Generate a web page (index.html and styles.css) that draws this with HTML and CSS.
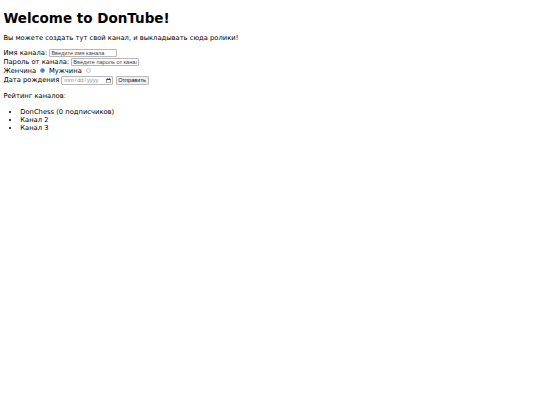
FILE: index.html
```html
<!DOCTYPE html>
<html lang="ru">
<head>
<meta charset="utf-8">
<title>DonTube</title>
<link rel="stylesheet" href="styles.css">
</head>
<body class="page">
<h1 class="title">Welcome to DonTube!</h1>
<p class="intro">Вы можете создать тут свой канал, и выкладывать сюда ролики!</p>
<form class="channel-form">
Имя канала: <input class="field field-name" type="text" placeholder="Введите имя канала"><br>
Пароль от канала: <input class="field field-pass" type="password" placeholder="Введите пароль от канала"><br>
Женчина <input class="radio" type="radio" name="sex" checked> Мужчина <input class="radio" type="radio" name="sex"><br>
Дата рождения <input class="field field-date" type="date"> <input class="submit" type="submit" value="Отправить">
</form>
<p class="rating-title">Рейтинг каналов:</p>
<ul class="rating">
<li>DonChess (0 подписчиков)</li>
<li>Канал 2</li>
<li>Канал 3</li>
</ul>
</body>
</html>
```
FILE: styles.css
```css
.page {
  margin: 0 3.4px;
  font-family: "DejaVu Sans", sans-serif;
  font-size: 6.75px;
  line-height: 8px;
  color: #000;
  background: #fff;
}
.title {
  margin: 10px 0 0;
  font-size: 13.5px;
  line-height: 16px;
  font-weight: bold;
}
.intro {
  margin: 8px 0 6.5px;
}
.channel-form {
  margin: 0;
  line-height: 9px;
}
.field, .submit {
  box-sizing: border-box;
  margin: 0;
  font-family: "Liberation Sans", Arial, sans-serif;
  font-size: 5.6px;
  line-height: 6px;
  vertical-align: middle;
  color: #111;
}
.field {
  height: 8px;
  padding: 0 1px;
  border: 1px solid #b8b8b8;
  border-radius: 1px;
  background: #fff;
}
.field::placeholder {
  color: #444;
}
.field-name {
  width: 68px;
}
.field-pass {
  width: 68px;
}
.field-date {
  width: 52px;
  height: 9px;
  color: #888;
}
.field-date::-webkit-calendar-picker-indicator {
  margin: 0;
  padding: 0;
  width: 5px;
  height: 5px;
}
.submit {
  width: 33px;
  height: 9px;
  padding: 0;
  border: 1px solid #bdbdbd;
  border-radius: 1px;
  background: #efefef;
}
.radio {
  appearance: none;
  -webkit-appearance: none;
  box-sizing: border-box;
  display: inline-block;
  width: 5px;
  height: 5px;
  margin: 0 1.5px 0 2px;
  border: 0.8px solid #c6c6c6;
  border-radius: 50%;
  background: #fff;
  vertical-align: middle;
}
.radio:checked {
  border-color: #6aa6f2;
  background: #2f7fee;
}
.rating-title {
  margin: 7.5px 0 8px;
}
.rating {
  margin: 0;
  padding-left: 16.9px;
}
```
